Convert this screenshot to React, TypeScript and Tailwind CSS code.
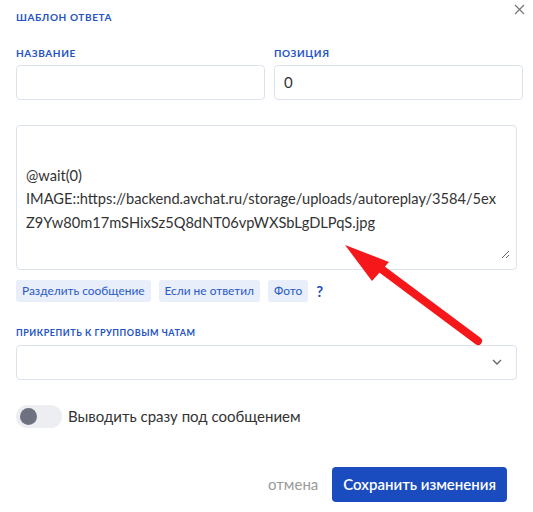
import React from "react";

const font = { fontFamily: "Lato, 'Noto Sans', sans-serif" };

export default function App() {
  const text =
    "\n@wait(0)\nIMAGE::https://backend.avchat.ru/storage/uploads/autoreplay/3584/5ex\nZ9Yw80m17mSHixSz5Q8dNT06vpWXSbLgDLPqS.jpg";
  return (
    <div className="relative w-[533px] h-[512px] bg-white text-[#333]" style={font}>
      <div className="pl-4 pr-4 pt-[11px]">
        <div className="flex justify-between">
          <div className="text-[10px] font-bold tracking-[0.06em] text-[#2353c5] leading-[12px]">ШАБЛОН ОТВЕТА</div>
        </div>
        <div className="mt-[24px] flex gap-[9px] w-[507px]">
          <div className="w-[249px] shrink-0">
            <div className="text-[10px] font-bold tracking-[0.06em] text-[#2353c5] leading-[12px]">НАЗВАНИЕ</div>
            <div className="mt-[6px] h-[35px] rounded-[4px] border border-[#dce3ef]"></div>
          </div>
          <div className="w-[249px] shrink-0">
            <div className="text-[10px] font-bold tracking-[0.06em] text-[#2353c5] leading-[12px]">ПОЗИЦИЯ</div>
            <div className="mt-[6px] h-[35px] rounded-[4px] border border-[#dce3ef] flex items-center pl-[9px] text-[15px] text-[#333]">0</div>
          </div>
        </div>
        <div className="mt-[25px] w-[501px] h-[145px] rounded-[4px] border border-[#dce3ef] relative">
          <div className="pl-[9px] pr-[4px] pt-[14px] text-[14.65px] leading-[23.5px] whitespace-pre text-[#333]">{text}</div>
          <svg className="absolute right-[6px] bottom-[10px]" width="9" height="9" viewBox="0 0 9 9">
            <path d="M8 1L1 8M8 5L5 8" stroke="#666" strokeWidth="1" />
          </svg>
        </div>
        <div className="mt-[10px] flex items-center gap-[8px]">
          <span className="h-[22px] px-[6px] rounded-[3px] bg-[#e8eefa] text-[#2a5ac6] text-[11.9px] flex items-center">Разделить сообщение</span>
          <span className="h-[22px] px-[6px] rounded-[3px] bg-[#e8eefa] text-[#2a5ac6] text-[11.9px] flex items-center">Если не ответил</span>
          <span className="h-[22px] px-[6px] rounded-[3px] bg-[#e8eefa] text-[#2a5ac6] text-[11.9px] flex items-center">Фото</span>
          <span className="text-[#1f4fc1] text-[15px] font-bold">?</span>
        </div>
        <div className="mt-[24px] text-[9px] font-bold tracking-[0.06em] text-[#2353c5] leading-[12px]">ПРИКРЕПИТЬ К ГРУППОВЫМ ЧАТАМ</div>
        <div className="mt-[6px] w-[501px] h-[35px] rounded-[4px] border border-[#dce3ef] flex items-center justify-end pr-[14px]">
          <svg width="10" height="6" viewBox="0 0 10 6">
            <path d="M1 1l4 4 4-4" fill="none" stroke="#666" strokeWidth="1.3" />
          </svg>
        </div>
        <div className="mt-[25px] flex items-center gap-[6px]">
          <div className="w-[46px] h-[23px] rounded-full bg-[#eceef1] flex items-center pl-[4px]">
            <div className="w-[17px] h-[17px] rounded-full bg-[#6d7180]"></div>
          </div>
          <span className="text-[15px] text-[#333]">Выводить сразу под сообщением</span>
        </div>
        <div className="mt-[39px] flex items-center justify-end gap-[14px] w-[491px]">
          <span className="text-[15px] text-[#9a9a9a]">отмена</span>
          <button className="h-[35px] px-[11px] rounded-[4px] bg-[#1a4cbf] text-white text-[15px] font-semibold">Сохранить изменения</button>
        </div>
      </div>
      <svg className="absolute right-[8px] top-[4px]" width="11" height="11" viewBox="0 0 11 11">
        <path d="M1 1l9 9M10 1l-9 9" stroke="#777" strokeWidth="1.2" />
      </svg>
      <svg className="absolute left-0 top-0 pointer-events-none" width="533" height="512">
        <line x1="380" y1="268" x2="478" y2="341" stroke="#f5171a" strokeWidth="8" strokeLinecap="round" />
        <polygon points="345,245 389,262 372,281" fill="#f5171a" />
      </svg>
    </div>
  );
}
